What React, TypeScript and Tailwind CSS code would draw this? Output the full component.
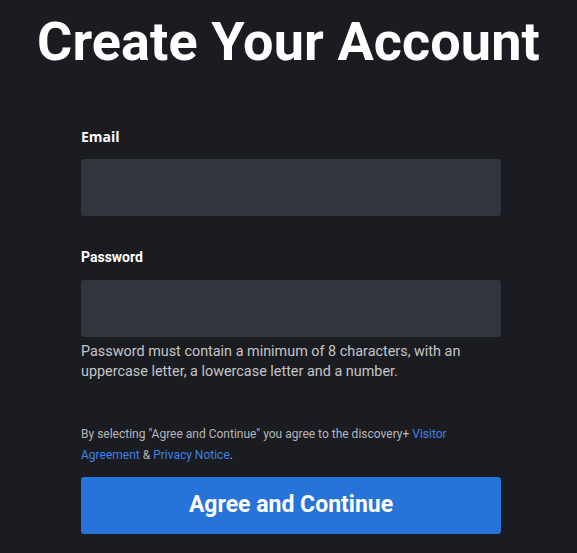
export default function App() {
  return (
    <div className="min-h-[553px] w-full bg-[#1b1c21] font-['Roboto',sans-serif] text-white">
      <h1 className="pt-[10px] text-center text-[54px] font-bold leading-[64px] tracking-[0.1px]">
        Create Your Account
      </h1>

      <form className="ml-[81px] mt-[54px] w-[420px]">
        <label className="block text-[14px] font-bold leading-[18px] font-['Open_Sans',sans-serif]">
          Email
        </label>
        <input
          type="email"
          className="mt-[13px] block h-[57px] w-full rounded-[3px] bg-[#31353d] px-4 text-[16px] outline-none"
        />

        <label className="mt-[32px] block text-[14px] font-bold leading-[18px]">
          Password
        </label>
        <input
          type="password"
          className="mt-[14px] block h-[57px] w-full rounded-[3px] bg-[#31353d] px-4 text-[16px] outline-none"
        />
        <p className="mt-[5px] text-[14.4px] leading-[20px] text-[#c4c5c8]">
          Password must contain a minimum of 8 characters, with an uppercase
          letter, a lowercase letter and a number.
        </p>

        <p className="mt-[42px] text-[12px] leading-[21px] text-[#b5b7bc]">
          By selecting "Agree and Continue" you agree to the discovery+{" "}
          <span className="text-[#3b82e6]">Visitor Agreement</span> &amp;{" "}
          <span className="text-[#3b82e6]">Privacy Notice</span>.
        </p>

        <button
          type="button"
          className="mt-[11px] flex h-[57px] w-full items-center justify-center rounded-[3px] bg-[#2674d9] text-[23px] font-bold"
        >
          Agree and Continue
        </button>
      </form>
    </div>
  );
}
